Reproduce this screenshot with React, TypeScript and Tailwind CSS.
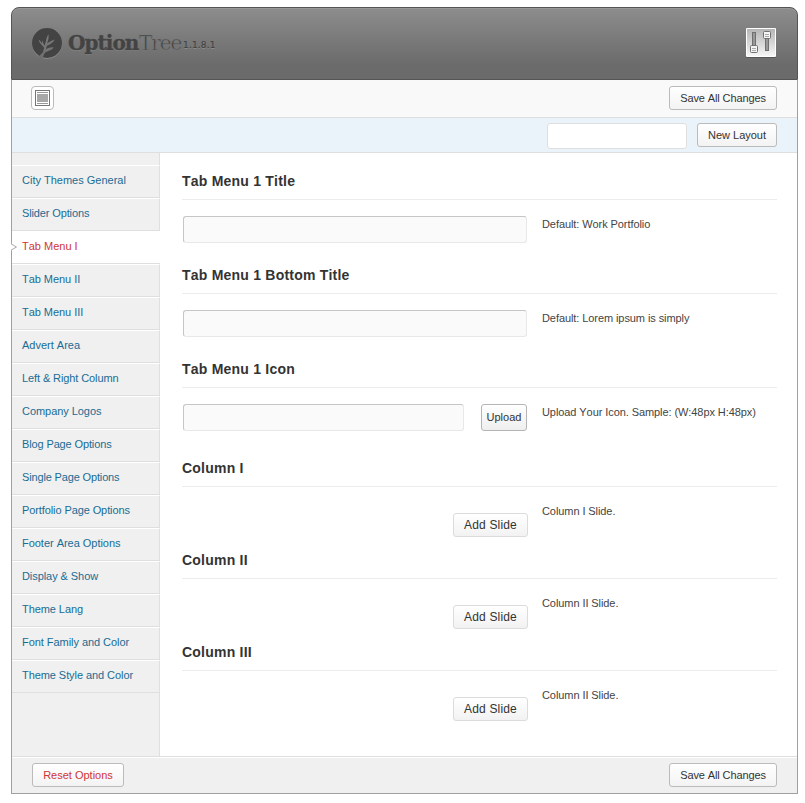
import type { ReactNode } from "react";

const menu = [
  { label: "City Themes General", tracking: "" },
  { label: "Slider Options", tracking: "tracking-[-0.13px]" },
  { label: "Tab Menu I", tracking: "" },
  { label: "Tab Menu II", tracking: "tracking-[-0.05px]" },
  { label: "Tab Menu III", tracking: "tracking-[-0.05px]" },
  { label: "Advert Area", tracking: "" },
  { label: "Left & Right Column", tracking: "tracking-[-0.1px]" },
  { label: "Company Logos", tracking: "tracking-[-0.05px]" },
  { label: "Blog Page Options", tracking: "tracking-[-0.13px]" },
  { label: "Single Page Options", tracking: "tracking-[-0.15px]" },
  { label: "Portfolio Page Options", tracking: "tracking-[-0.1px]" },
  { label: "Footer Area Options", tracking: "tracking-[-0.03px]" },
  { label: "Display & Show", tracking: "tracking-[-0.07px]" },
  { label: "Theme Lang", tracking: "tracking-[-0.07px]" },
  { label: "Font Family and Color", tracking: "tracking-[-0.05px]" },
  { label: "Theme Style and Color", tracking: "tracking-[-0.07px]" },
];

function Button({ children, className = "" }: { children: ReactNode; className?: string }) {
  return (
    <button
      className={`flex h-6 items-center justify-center rounded-[3px] border border-[#bbb] bg-linear-to-b from-white to-[#f3f3f3] text-[11px] whitespace-nowrap ${className}`}
    >
      {children}
    </button>
  );
}

function TreeMark() {
  return (
    <svg width="30" height="31" viewBox="0 0 30 31" className="block">
      <defs>
        <mask id="branches">
          <rect width="30" height="31" fill="#fff" />
          <path
            fill="#000"
            d="M5.5 30 L11 24.2 L12.2 19.8 C10.5 17.3 7.6 15.8 6.6 11.6 C8.4 13.4 9.4 14.6 10.3 15.6 C10.2 14.6 10 13.6 10.4 12.4 C11 14.4 11.5 16.4 12.8 17.6 C14 14 14.2 9.6 16.4 6.3 C16.8 9.6 16.3 12.4 15 15.2 C17.2 14 19.4 12.8 22.6 11.4 C21 14.8 18 16.2 14.7 17.8 L13.9 21.2 C16 19.8 18.2 19.4 21.8 19.4 C19.6 22.2 16.4 22.4 13.4 24.2 C11.8 25.6 11.4 27.4 10.6 30.5 Z"
          />
        </mask>
      </defs>
      <circle cx="15" cy="16" r="15" fill="#939393" mask="url(#branches)" opacity=".75" />
      <circle cx="15" cy="15" r="15" fill="#434343" mask="url(#branches)" />
    </svg>
  );
}

function Logo() {
  return (
    <div className="flex h-[31px] leading-[30px] whitespace-nowrap text-[#434343] [text-shadow:0_1px_0_#8c8c8c]">
      <TreeMark />
      <span className="ml-1.5 w-[71px] font-['DejaVu_Serif',serif] text-[20px] font-bold tracking-[-0.95px] [-webkit-text-stroke:0.35px_#434343]">Option</span>
      <span className="w-[43px] font-['DejaVu_Serif',serif] text-[20px] tracking-[-1.05px] [-webkit-text-stroke:0.6px_#797979] [text-shadow:none]">Tree</span>
      <span className="ml-px pt-0.5 font-['DejaVu_Sans',sans-serif] text-[9px] tracking-[0.15px] [-webkit-text-stroke:0.2px_#434343]">1.1.8.1</span>
    </div>
  );
}

function SlidersIcon() {
  return (
    <svg width="32" height="32" viewBox="0 0 32 32" className="block">
      <defs>
        <linearGradient id="plate" x1="0" y1="0" x2="0" y2="1">
          <stop offset="0" stopColor="#b5b5b5" />
          <stop offset="1" stopColor="#f6f6f6" />
        </linearGradient>
      </defs>
      <rect x="1" y="2" width="30" height="29" rx="1.5" fill="#555" />
      <rect x="1" y="1" width="30" height="29" rx="1" fill="#fff" />
      <rect x="2" y="2" width="28" height="27" fill="url(#plate)" />
      <g stroke="#707070" fill="#999">
        <rect x="7.5" y="5.5" width="3" height="14" />
        <rect x="20.5" y="10.5" width="3" height="13" />
        <rect x="5.5" y="18.5" width="7" height="7" rx="1" fill="#f4f4f4" />
        <rect x="18.5" y="4.5" width="7" height="7" rx="1" fill="#f4f4f4" />
        <path d="M7 21.5h4M7 23.5h4M20 7.5h4M20 9.5h4" stroke="#aaa" />
      </g>
    </svg>
  );
}

function LayoutIcon() {
  return (
    <svg width="15" height="16" viewBox="0 0 15 16" className="block">
      <rect x=".5" y=".5" width="14" height="15" fill="#fff" stroke="#777" />
      <path d="M2 2.5h11M2 13.5h11" stroke="#999" />
      <rect x="2" y="4" width="11" height="8" fill="#a8a8a8" />
    </svg>
  );
}

function Field({ title, note, className, children }: { title: string; note: string; className: string; children: ReactNode }) {
  return (
    <section className={className}>
      <h3 className="h-[38px] border-b border-[#ececec] text-sm leading-[38px] font-bold tracking-[0.22px] text-[#333]">{title}</h3>
      <div className="flex pt-4">
        <div className="flex w-[360px] pl-px">{children}</div>
        <p className="h-4 text-[11px] leading-4 tracking-[-0.08px] text-[#444]">{note}</p>
      </div>
    </section>
  );
}

const inputClass = "h-[27px] rounded-[3px] border border-t-[#c6c6c6] border-r-[#e8e8e8] border-b-[#e8e8e8] border-l-[#c6c6c6] bg-[#fafafa] px-2 text-[11px] outline-none";

function AddSlide() {
  return (
    <button className="mt-2.5 ml-[270px] h-6 w-[75px] rounded-[3px] border border-[#dcdcdc] bg-linear-to-b from-white to-[#f2f2f2] text-xs tracking-[0.17px] text-[#333]">
      Add Slide
    </button>
  );
}

export default function App() {
  return (
    <div className="h-[803px] w-[805px] bg-white pt-[7px] pl-[11px] font-['Liberation_Sans',Arial,sans-serif] text-[#333] [font-kerning:none]">
      <div className="w-[787px]">
        <header className="flex h-[73px] justify-between rounded-t-[8px] border border-[#555] bg-linear-to-b from-[#8d8d8d] from-0% to-[#6b6b6b] to-80% pt-5 pr-5 pl-5 shadow-[inset_0_1px_0_#989898]">
          <Logo />
          <div className="-mt-px">
            <SlidersIcon />
          </div>
        </header>

        <div className="border-x border-b border-[#a0a0a0]">
          <div className="flex h-[38px] items-start justify-between border-b border-[#dfdfdf] bg-[#f9f9f9] pt-1.5 pr-5 pl-[19px]">
            <button className="flex h-6 w-[23px] items-center justify-center rounded-[4px] border border-[#bbb] bg-white">
              <LayoutIcon />
            </button>
            <Button className="w-[108px] tracking-[-0.12px]">Save All Changes</Button>
          </div>

          <div className="flex h-[35px] items-start justify-end gap-2.5 border-b border-[#dfdfdf] bg-[#eaf2fa] pt-[5px] pr-5">
            <input className="h-[26px] w-[140px] rounded-[3px] border border-[#dfdfdf] bg-white px-2 text-[11px] outline-none" />
            <Button className="w-20">New Layout</Button>
          </div>

          <div className="flex h-[603px]">
            <nav className="flex w-[148px] flex-col bg-[#f0f0f0]">
              <div className="h-3 border-r border-[#dfdfdf]" />
              {menu.map(({ label, tracking }) =>
                label === "Tab Menu I" ? (
                  <a key={label} className="relative block h-[33px] border-b border-[#dfdfdf] bg-white pl-2.5 text-[11px] leading-[31px] text-[#d03535]">
                    <svg width="7" height="8" viewBox="0 0 7 8" className="absolute top-3 -left-px">
                      <path d="M0 .5 6 4 0 7.5Z" fill="#fff" />
                      <path d="M0 .8 5.5 4 0 7.2" fill="none" stroke="#aaa" />
                    </svg>
                    {label}
                  </a>
                ) : (
                  <a key={label} className={`block h-[33px] border-t border-r border-b border-t-white border-r-[#dfdfdf] border-b-[#dfdfdf] pl-2.5 text-[11px] leading-[29px] text-[#196c94] ${tracking}`}>
                    {label}
                  </a>
                ),
              )}
              <div className="flex-1 border-r border-[#dfdfdf]" />
            </nav>

            <main className="flex-1 pt-[9px] pr-5 pl-[22px]">
              <Field title="Tab Menu 1 Title" note="Default: Work Portfolio" className="h-[94px]">
                <input className={`w-[344px] ${inputClass}`} />
              </Field>
              <Field title="Tab Menu 1 Bottom Title" note="Default: Lorem ipsum is simply" className="h-[94px]">
                <input className={`w-[344px] ${inputClass}`} />
              </Field>
              <Field title="Tab Menu 1 Icon" note="Upload Your Icon. Sample: (W:48px H:48px)" className="h-[99px]">
                <input className={`w-[281px] ${inputClass}`} />
                <button className="ml-[17px] h-[27px] w-[46px] rounded-[3px] border border-[#b5b5b5] bg-linear-to-b from-white to-[#efefef] text-[11px]">Upload</button>
              </Field>
              <Field title="Column I" note="Column I Slide." className="h-[92px]">
                <AddSlide />
              </Field>
              <Field title="Column II" note="Column II Slide." className="h-[92px]">
                <AddSlide />
              </Field>
              <Field title="Column III" note="Column II Slide." className="h-[92px]">
                <AddSlide />
              </Field>
            </main>
          </div>

          <footer className="flex h-[37px] items-start justify-between border-t border-[#dfdfdf] bg-[#f0f0f0] pt-1.5 pr-5 pl-5 shadow-[inset_0_1px_0_#fff]">
            <Button className="w-[92px] text-[#d03535]">Reset Options</Button>
            <Button className="w-[108px] tracking-[-0.12px]">Save All Changes</Button>
          </footer>
        </div>
      </div>
    </div>
  );
}
